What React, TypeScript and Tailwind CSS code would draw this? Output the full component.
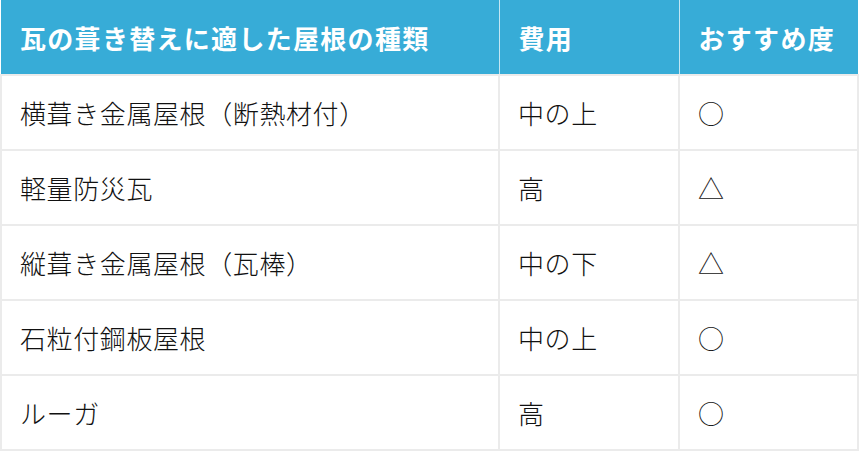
const ROWS = [
  { name: "横葺き金属屋根（断熱材付）", cost: "中の上", rate: "○" },
  { name: "軽量防災瓦", cost: "高", rate: "△" },
  { name: "縦葺き金属屋根（瓦棒）", cost: "中の下", rate: "△" },
  { name: "石粒付鋼板屋根", cost: "中の上", rate: "○" },
  { name: "ルーガ", cost: "高", rate: "○" },
];

export default function App() {
  return (
    <div
      className="w-[859px] h-[451px] bg-white overflow-hidden"
      style={{ fontFamily: '"Noto Sans CJK JP", "Noto Sans", sans-serif' }}
    >
      <table className="w-full border-collapse table-fixed">
        <colgroup>
          <col className="w-[498px]" />
          <col className="w-[180px]" />
          <col />
        </colgroup>
        <thead>
          <tr className="h-[75px] bg-[#37acd7] text-white text-[26px] font-bold tracking-[1.3px]">
            <th className="text-left font-bold pl-[19px] border-r border-white/70">瓦の葺き替えに適した屋根の種類</th>
            <th className="text-left font-bold pl-[19px] border-r border-white/70">費用</th>
            <th className="text-left font-bold pl-[19px]">おすすめ度</th>
          </tr>
        </thead>
        <tbody>
          {ROWS.map((r) => (
            <tr key={r.name} className="h-[75px] text-[26px] font-light text-[#111] tracking-[0.6px]">
              <td className="pl-[18px] border-2 border-[#ebebeb]">{r.name}</td>
              <td className="pl-[18px] border-2 border-[#ebebeb]">{r.cost}</td>
              <td className="pl-[18px] border-2 border-[#ebebeb]">{r.rate}</td>
            </tr>
          ))}
        </tbody>
      </table>
    </div>
  );
}
